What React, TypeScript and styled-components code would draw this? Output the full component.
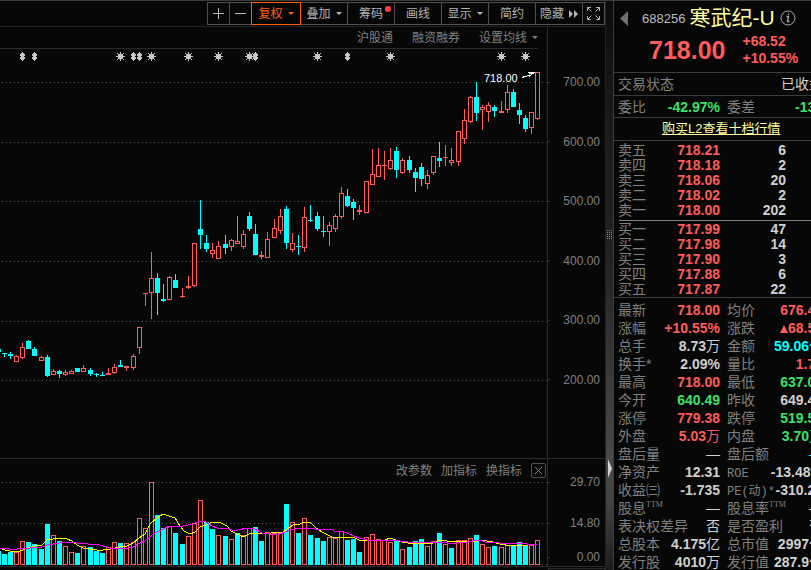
import React from "react";
import styled, { createGlobalStyle, css } from "styled-components";

const RED = "#ff5c5c";
const GREEN = "#3ee06a";
const CYAN = "#00ffff";
const LIGHT = "#d0d0d0";
const DIM = "#808080";
const LINE = "#3c3c3c";
const ORANGE = "#ff6010";

const tones = { red: RED, green: GREEN, cyan: CYAN, light: LIGHT };
type Tone = keyof typeof tones;

const GlobalStyle = createGlobalStyle`
  * { box-sizing: border-box; }
  html, body, #root { height: 100%; }
  body {
    margin: 0;
    background: #070707;
    overflow: hidden;
    color: ${LIGHT};
    font-family: "Liberation Sans", "Noto Sans CJK SC", sans-serif;
    font-size: 12px;
  }
`;

const Page = styled.div`
  display: grid;
  grid-template-columns: minmax(0, 1fr) 7px 198px;
  height: 100%;
  overflow: hidden;
  border-top: 1px solid ${LINE};
`;

const Main = styled.main`
  display: flex;
  flex-direction: column;
  min-width: 0;
  border-right: 1px solid #222;
`;

const Toolbar = styled.nav`
  display: flex;
  justify-content: flex-end;
  height: 26px;
  padding: 1px 0;
  border-bottom: 1px solid #222;
`;

const ToolButton = styled.button<{ $size?: "icon" | "text"; $active?: boolean }>`
  display: flex;
  align-items: center;
  justify-content: center;
  gap: 5px;
  width: ${(p) => (p.$size === "icon" ? 23 : p.$active ? 50 : 48)}px;
  height: 23px;
  margin-left: -1px;
  padding: 0;
  border: 1px solid ${(p) => (p.$active ? ORANGE : "#505050")};
  background: none;
  color: ${(p) => (p.$active ? ORANGE : "#b4b4b4")};
  font: inherit;
  line-height: 16px;
  white-space: nowrap;
  z-index: ${(p) => (p.$active ? 1 : 0)};
`;

const Caret = styled.span`
  border: 3px solid transparent;
  border-top-color: currentColor;
  border-bottom-width: 0;
`;

const Dotted = styled.span`
  position: relative;
  &::after {
    content: "";
    position: absolute;
    top: 0;
    right: -8px;
    width: 6px;
    height: 6px;
    border-radius: 50%;
    background: #ff4040;
  }
`;

const ChartGrid = styled.section<{ $height: number }>`
  display: grid;
  grid-template-columns: minmax(0, 1fr) 57px;
  height: ${(p) => p.$height}px;
  border-bottom: 1px solid #2a2a2a;
`;

const Plot = styled.div`
  display: flex;
  flex-direction: column;
  border-right: 1px solid #2a2a2a;
  min-width: 0;
`;

const Links = styled.div`
  display: flex;
  align-items: center;
  justify-content: flex-end;
  gap: 19px;
  height: 22px;
  margin-right: 9px;
  border-bottom: 1px solid #2a2a2a;
`;

const TextButton = styled.button`
  display: flex;
  align-items: center;
  gap: 5px;
  padding: 0;
  border: 0;
  background: none;
  color: ${DIM};
  font: inherit;
  line-height: 16px;
  white-space: nowrap;
`;

const Actions = styled.div`
  display: flex;
  align-items: center;
  justify-content: flex-end;
  gap: 9px;
  height: 23px;
`;

const CloseButton = styled.button`
  display: flex;
  width: 15px;
  height: 15px;
  margin: 0 1px 0 0;
  padding: 0;
  border: 1px solid #505050;
  border-radius: 2px;
  background: none;
  color: ${DIM};
`;

const Drawing = styled.svg`
  display: block;
  width: 100%;
  flex: 1;
  min-height: 0;
`;

const PriceAxis = styled.div`
  display: flex;
  flex-direction: column;
  justify-content: space-between;
  height: 310px;
  margin-top: 49px;
`;

const VolumeAxis = styled.div`
  display: grid;
  grid-template-rows: 41px 34px 12px;
  align-content: start;
  margin-top: 17px;
`;

const AxisLabel = styled.div`
  display: flex;
  align-items: center;
  justify-content: space-between;
  height: 12px;
  padding-right: 5px;
  color: ${DIM};
  line-height: 12px;
  &::before {
    content: "";
    width: 2px;
    height: 1px;
    background: #333;
  }
`;

const Footer = styled.div`
  flex: 1;
  display: flex;
  justify-content: flex-end;
`;

const FooterBox = styled.div`
  width: 57px;
  margin-top: 1px;
  border: 1px solid #2a2a2a;
  border-bottom: 0;
`;

const Splitter = styled.div`
  display: flex;
  flex-direction: column;
  align-items: center;
  justify-content: space-between;
  padding: 229px 0 92px;
  background: linear-gradient(#0c0c0c, #1a1a1a 20%, #222 45%, #4a4a4a 80%, #444 88%, #1c1c1c);
`;

const Side = styled.aside`
  overflow: hidden;
  border-left: 1px solid ${LINE};
`;

const SideInner = styled.div`
  width: 210px;
`;

const Header = styled.header`
  height: 72px;
  padding-top: 1px;
  border-bottom: 1px solid ${LINE};
`;

const Band = styled.div<{ $wide?: boolean }>`
  height: ${(p) => (p.$wide ? 23 : 22)}px;
  padding-top: 2px;
  border-bottom: 1px solid ${LINE};
`;

const TitleRow = styled.div`
  display: flex;
  align-items: center;
  height: 32px;
  padding-left: 6px;
`;

const BackButton = styled.button`
  display: flex;
  margin-right: 14px;
  padding: 0;
  border: 0;
  background: none;
`;

const Code = styled.span`
  margin-right: 4px;
  color: #b8bec8;
  font-size: 13px;
`;

const Name = styled.h1`
  margin: 0 5px 0 0;
  color: #ffffa0;
  font-size: 21px;
  font-weight: 400;
  line-height: 30px;
  white-space: nowrap;
`;

const PriceRow = styled.div`
  display: flex;
  align-items: center;
  gap: 17px;
  height: 32px;
  padding-left: 35px;
  color: ${RED};
`;

const BigPrice = styled.strong`
  font-size: 25px;
  line-height: 28px;
`;

const Change = styled.div`
  font-size: 14px;
  font-weight: 700;
  line-height: 17px;
`;

const BuyLink = styled.a`
  display: block;
  margin-left: 48px;
  color: #ffffa0;
  font-size: 13px;
  line-height: 18px;
  white-space: nowrap;
`;

const Book = styled.table`
  width: 168px;
  margin-left: 4px;
  border-collapse: collapse;
  table-layout: fixed;
  font-size: 14px;
`;

const cell = css`
  height: 15px;
  padding: 0;
  line-height: 15px;
  white-space: nowrap;
`;

const LevelName = styled.th`
  ${cell}
  width: 34px;
  color: ${DIM};
  font-weight: 400;
  text-align: left;
`;

const LevelPrice = styled.td`
  ${cell}
  width: 68px;
  color: ${RED};
  font-weight: 700;
  text-align: right;
`;

const LevelSize = styled.td`
  ${cell}
  color: ${LIGHT};
  font-weight: 700;
  text-align: right;
`;

const BookArea = styled.section`
  padding: 2px 0 0;
  border-bottom: 1px solid ${LINE};
`;

const BookRule = styled.hr`
  height: 1px;
  margin: 2px 0 1px 5px;
  border: 0;
  background: ${DIM};
`;

const Stats = styled.div`
  padding-top: 3px;
`;

const StatRow = styled.dl`
  display: grid;
  grid-template-columns: 102px 96px;
  column-gap: 7px;
  margin: 0;
  padding-left: 4px;
`;

const Stat = styled.div`
  display: flex;
  justify-content: space-between;
  height: 18px;
  font-size: 14px;
  line-height: 18px;
  white-space: nowrap;
`;

const Label = styled.dt`
  color: ${DIM};
`;

const Value = styled.dd<{ $tone: Tone }>`
  margin: 0;
  color: ${(p) => tones[p.$tone]};
  font-weight: 700;
`;

const Unit = styled.span`
  font-weight: 400;
`;

const Latin = styled.span`
  font-family: "Liberation Mono", "Noto Sans CJK SC", monospace;
  font-size: 12px;
`;

const Sup = styled.sup`
  color: #7c8088;
  font-family: "Liberation Serif", serif;
  font-size: 8px;
  line-height: 8px;
`;

/* x, high, body top, body bottom, low, direction, volume top */
type Candle = [number, number, number, number, number, "u" | "d", number];

const candles: Candle[] = [
  [-2, 349, 349, 352, 352, "d", 551], [4, 353, 353, 354, 357, "d", 554], [10, 352, 354, 356, 359, "d", 552],
  [16, 355, 356, 362, 362, "u", 552], [22, 343, 347, 358, 359, "u", 541], [28, 340, 341, 349, 349, "d", 542],
  [34, 347, 349, 356, 356, "d", 544], [41, 356, 357, 361, 361, "u", 549], [47, 355, 357, 376, 377, "d", 524],
  [53, 369, 371, 375, 375, "u", 535], [59, 370, 371, 374, 378, "d", 541], [65, 370, 372, 375, 376, "u", 546],
  [71, 370, 371, 374, 374, "u", 552], [77, 368, 368, 372, 372, "d", 553], [83, 365, 368, 372, 372, "u", 546],
  [90, 368, 370, 374, 376, "d", 547], [96, 373, 374, 375, 377, "d", 551], [102, 372, 375, 376, 376, "d", 553],
  [108, 368, 373, 375, 375, "u", 547], [114, 364, 367, 373, 374, "u", 542], [120, 360, 365, 367, 367, "d", 543],
  [126, 366, 366, 368, 371, "u", 543], [133, 354, 356, 368, 370, "u", 542], [139, 327, 327, 348, 354, "u", 518],
  [145, 293, 293, 294, 306, "u", 528], [151, 252, 278, 293, 319, "u", 482], [157, 273, 278, 293, 315, "d", 515],
  [163, 284, 299, 301, 302, "d", 528], [169, 276, 277, 300, 300, "u", 526], [175, 274, 280, 288, 288, "d", 533],
  [182, 288, 296, 297, 298, "u", 544], [188, 276, 286, 288, 289, "u", 536], [194, 243, 243, 286, 287, "u", 523],
  [200, 200, 229, 235, 249, "d", 500], [206, 235, 243, 249, 252, "d", 522], [212, 243, 250, 254, 258, "u", 529],
  [218, 241, 246, 259, 259, "u", 535], [225, 235, 244, 248, 254, "d", 536], [231, 239, 240, 247, 251, "u", 539],
  [237, 216, 241, 244, 244, "u", 533], [243, 230, 234, 247, 249, "u", 535], [249, 212, 216, 229, 231, "d", 528],
  [255, 224, 234, 255, 255, "d", 527], [261, 251, 255, 257, 259, "u", 541], [267, 232, 239, 258, 258, "u", 532],
  [274, 219, 228, 238, 238, "u", 533], [280, 209, 216, 231, 234, "u", 533], [286, 206, 209, 243, 249, "d", 504],
  [292, 233, 243, 250, 252, "u", 522], [298, 235, 246, 247, 255, "d", 533], [304, 207, 217, 248, 252, "u", 518],
  [310, 205, 220, 221, 222, "d", 535], [317, 212, 216, 229, 231, "d", 538], [323, 216, 231, 232, 237, "d", 541],
  [329, 222, 225, 232, 246, "u", 537], [335, 214, 216, 229, 232, "u", 538], [341, 187, 193, 217, 219, "u", 531],
  [347, 189, 196, 206, 207, "d", 540], [353, 199, 202, 208, 220, "d", 539], [359, 205, 210, 212, 215, "u", 552],
  [366, 181, 181, 213, 213, "u", 537], [372, 149, 174, 185, 185, "u", 534], [378, 148, 165, 177, 177, "u", 539],
  [384, 151, 165, 166, 180, "u", 540], [390, 148, 160, 169, 170, "u", 542], [396, 147, 151, 170, 178, "d", 540],
  [402, 158, 160, 173, 174, "u", 549], [409, 156, 160, 170, 173, "d", 547], [415, 168, 172, 178, 192, "d", 541],
  [421, 163, 167, 179, 186, "d", 539], [427, 170, 175, 184, 189, "u", 546], [433, 156, 156, 173, 175, "u", 541],
  [439, 142, 158, 161, 167, "d", 533], [445, 145, 157, 158, 166, "u", 544], [451, 148, 160, 163, 166, "u", 548],
  [458, 131, 131, 162, 166, "u", 540], [464, 109, 120, 139, 144, "u", 540], [470, 96, 97, 122, 123, "u", 538],
  [476, 82, 97, 113, 121, "d", 535], [482, 105, 107, 110, 130, "u", 544], [488, 102, 105, 112, 122, "u", 547],
  [494, 105, 107, 111, 117, "d", 546], [501, 101, 111, 113, 113, "u", 547], [507, 85, 92, 110, 113, "u", 545],
  [513, 89, 92, 107, 107, "d", 545], [519, 103, 110, 115, 124, "d", 542], [525, 115, 118, 129, 132, "d", 545],
  [531, 112, 112, 128, 134, "u", 545], [537, 72, 72, 119, 120, "u", 540],
];

/* Volume bars are coloured against the previous close, so these days differ from their candle. */
const volumeFlips = new Set([41, 182, 200, 212, 237, 249, 261, 359, 451]);

const MA_FAST =
  "0,548 5,550 10,551 20,551 28,548 35,546 42,545 47,540 53,539 59,538 67,539 72,541 77,545 83,548 90,549 97,550 103,550 110,549 120,547 127,546 133,543 139,538 145,534 150,524 157,518 163,514 169,516 175,518 180,526 184,531 190,534 195,532 200,527 206,525 212,522 219,522 227,526 231,531 237,534 243,537 249,534 256,533 267,534 275,532 282,533 287,529 293,525 300,524 304,522 310,522 316,528 322,532 328,535 334,538 341,537 349,538 353,537 359,540 385,540 390,538 396,540 402,542 408,543 414,544 420,543 425,543 433,543 441,540 447,541 452,542 457,541 473,542 482,540 487,541 493,542 500,544 512,546 518,545 527,545 533,544 537,544";
const MA_SLOW =
  "0,548 10,549 17,549 22,548 30,548 35,547 40,548 47,545 59,543 67,542 77,543 88,544 100,545 110,548 120,548 128,548 133,547 140,543 145,541 152,535 157,532 165,528 172,526 183,526 193,524 200,521 206,522 212,526 217,528 227,528 232,530 238,530 247,528 253,528 262,533 270,534 280,534 290,530 295,529 304,528 315,529 332,529 334,531 342,531 349,534 359,538 367,540 393,540 400,541 408,542 420,542 433,543 443,542 452,544 460,542 467,542 473,541 480,540 485,542 492,542 499,543 527,544 532,544 537,544";

const SUNS = [120, 151, 188, 218, 249, 317, 390, 501, 525];
const SPLITS = [22, 34, 133, 139, 255, 347];

function GridLine({ y }: { y: number }) {
  return <path d={`M2 ${y}.5H547`} stroke="#585858" strokeDasharray="1 3" />;
}

function CandleMark({ c }: { c: Candle }) {
  const [x, high, top, bottom, low, dir] = c;
  if (dir === "d") {
    return (
      <g fill={CYAN}>
        <rect x={x} y={high} width={1} height={low - high} />
        <rect x={x - 2} y={top} width={5} height={bottom - top} />
      </g>
    );
  }
  const solid = bottom - top < 3;
  return (
    <g fill={RED}>
      <rect x={x} y={high} width={1} height={top - high} />
      <rect x={x} y={bottom} width={1} height={low - bottom} />
      {solid ? (
        <rect x={x - 2} y={top} width={5} height={bottom - top} />
      ) : (
        <rect x={x - 1.5} y={top + 0.5} width={4} height={bottom - top - 1} fill="#070707" stroke={RED} />
      )}
    </g>
  );
}

function PriceChart() {
  return (
    <Drawing viewBox="0 49 547 409" preserveAspectRatio="xMaxYMin meet" shapeRendering="crispEdges" aria-label="日K线">
      {[82, 142, 201, 261, 321, 380].map((y) => <GridLine key={y} y={y} />)}
      {SUNS.map((x) => (
        <g key={x} fill="#c8c8c8">
          <rect x={x - 2} y={54} width={5} height={5} />
          <path d={`M${x} 52h1v9h-1zM${x - 4} 56h9v1h-9zM${x - 3} 53h1v1h-1zM${x + 3} 53h1v1h-1zM${x - 3} 59h1v1h-1zM${x + 3} 59h1v1h-1z`} />
        </g>
      ))}
      {SPLITS.map((x) => (
        <path key={x} fill="#c8c8c8" d={`M${x} 52h1v1h1v1h1v2h-1v1h1v2h-1v1h-1v1h-1v-1h-1v-1h-1v-2h1v-1h-1v-2h1v-1h1z`} />
      ))}
      {candles.map((c) => <CandleMark key={c[0]} c={c} />)}
      <text x={484} y={82} fill="#fff" fontSize={11} fontFamily="Liberation Sans">718.00</text>
      <path d="M522 77.5L530 75" stroke="#fff" fill="none" />
      <path d="M528 72.500L536 72L529 77L530.500 74.500Z" fill="#fff" />
    </Drawing>
  );
}

function VolumeChart() {
  return (
    <Drawing viewBox="0 482 547 84" preserveAspectRatio="xMaxYMin meet" shapeRendering="crispEdges" aria-label="成交量">
      {[482, 523, 564].map((y) => <GridLine key={y} y={y} />)}
      {candles.map(([x, , , , , dir, top]) =>
        (dir === "d") !== volumeFlips.has(x) ? (
          <rect key={x} x={x - 2} y={top} width={5} height={565 - top} fill={CYAN} />
        ) : (
          <rect key={x} x={x - 1.5} y={top + 0.5} width={4} height={564 - top} fill="#070707" stroke={RED} />
        )
      )}
      <polyline points={MA_FAST} fill="none" stroke="#ffff00" />
      <polyline points={MA_SLOW} fill="none" stroke="#ff00ff" />
    </Drawing>
  );
}

const sells = [["卖五", "718.21", "6"], ["卖四", "718.18", "2"], ["卖三", "718.06", "20"], ["卖二", "718.02", "2"], ["卖一", "718.00", "202"]];
const buys = [["买一", "717.99", "47"], ["买二", "717.98", "14"], ["买三", "717.90", "3"], ["买四", "717.88", "6"], ["买五", "717.87", "22"]];

type Item = [React.ReactNode, React.ReactNode, string, Tone];

const Rise = () => (
  <svg width="8" height="8" fill="currentColor" aria-label="涨"><path d="M4 0L8 8H0Z" /></svg>
);

const stats: [Item, Item][] = [
  [["最新", "718.00", "", "red"], ["均价", "676.45", "", "red"]],
  [["涨幅", "+10.55%", "", "red"], ["涨跌", <><Rise />68.52</>, "", "red"]],
  [["总手", "8.73", "万", "light"], ["金额", "59.06", "亿", "cyan"]],
  [["换手*", "2.09%", "", "light"], ["量比", "1.74", "", "red"]],
  [["最高", "718.00", "", "red"], ["最低", "637.01", "", "green"]],
  [["今开", "640.49", "", "green"], ["昨收", "649.48", "", "light"]],
  [["涨停", "779.38", "", "red"], ["跌停", "519.58", "", "green"]],
  [["外盘", "5.03", "万", "red"], ["内盘", "3.70", "万", "green"]],
  [["盘后量", "", "—", "light"], ["盘后额", "", "—", "cyan"]],
  [["净资产", "12.31", "", "light"], [<Latin>ROE</Latin>, "-13.48%", "", "light"]],
  [["收益㈢", "-1.735", "", "light"], [<Latin>PE(动)*</Latin>, "-310.25", "", "light"]],
  [[<>股息<Sup>TTM</Sup></>, "", "—", "light"], [<>股息率<Sup>TTM</Sup></>, "", "—", "light"]],
  [["表决权差异", "", "否", "light"], ["是否盈利", "", "否", "light"]],
  [["总股本", "4.175", "亿", "light"], ["总市值", "2997", "亿", "light"]],
  [["发行股", "4010", "万", "light"], ["发行值", "287.9", "亿", "light"]],
];

function StatItem({ item }: { item: Item }) {
  const [label, value, unit, tone] = item;
  return (
    <Stat>
      <Label>{label}</Label>
      <Value $tone={tone}>{value}{unit && <Unit>{unit}</Unit>}</Value>
    </Stat>
  );
}

function Levels({ rows }: { rows: string[][] }) {
  return (
    <Book>
      <tbody>
        {rows.map(([name, price, size]) => (
          <tr key={name}>
            <LevelName scope="row">{name}</LevelName>
            <LevelPrice>{price}</LevelPrice>
            <LevelSize>{size}</LevelSize>
          </tr>
        ))}
      </tbody>
    </Book>
  );
}

export default function App() {
  return (
    <>
      <GlobalStyle />
      <Page>
        <Main>
          <Toolbar>
            <ToolButton $size="icon" aria-label="放大">
              <svg width="11" height="11" stroke="currentColor"><path d="M5.500 0V11M0 5.500H11" /></svg>
            </ToolButton>
            <ToolButton $size="icon" aria-label="缩小">
              <svg width="11" height="11" stroke="currentColor"><path d="M0 5.500H11" /></svg>
            </ToolButton>
            <ToolButton $active>复权<Caret /></ToolButton>
            <ToolButton>叠加<Caret /></ToolButton>
            <ToolButton><Dotted>筹码</Dotted></ToolButton>
            <ToolButton>画线</ToolButton>
            <ToolButton>显示<Caret /></ToolButton>
            <ToolButton>简约</ToolButton>
            <ToolButton>
              隐藏
              <svg width="9" height="8" fill="currentColor"><path d="M0 0L4 4L0 8ZM5 0L9 4L5 8Z" /></svg>
            </ToolButton>
            <ToolButton $size="icon" aria-label="全屏">
              <svg width="13" height="13" fill="none" stroke="currentColor">
                <path d="M.5 4V.5H4M.5 .5L4.500 4.500M9 .5H12.500V4M12.500 .5L8.500 4.500M.5 9V12.500H4M.5 12.500L4.500 8.500M9 12.500H12.500V9M12.500 12.500L8.500 8.500" />
              </svg>
            </ToolButton>
          </Toolbar>

          <ChartGrid $height={432}>
            <Plot>
              <Links>
                <TextButton>沪股通</TextButton>
                <TextButton>融资融券</TextButton>
                <TextButton>设置均线<Caret /></TextButton>
              </Links>
              <PriceChart />
            </Plot>
            <PriceAxis>
              {["700.00", "600.00", "500.00", "400.00", "300.00", "200.00"].map((t) => <AxisLabel key={t}>{t}</AxisLabel>)}
            </PriceAxis>
          </ChartGrid>

          <ChartGrid $height={108}>
            <Plot>
              <Actions>
                <TextButton>改参数</TextButton>
                <TextButton>加指标</TextButton>
                <TextButton>换指标</TextButton>
                <CloseButton aria-label="关闭">
                  <svg width="13" height="13" stroke="currentColor"><path d="M3 3L10 10M10 3L3 10" /></svg>
                </CloseButton>
              </Actions>
              <VolumeChart />
            </Plot>
            <VolumeAxis>
              {["29.70", "14.80", "0.00"].map((t) => <AxisLabel key={t}>{t}</AxisLabel>)}
            </VolumeAxis>
          </ChartGrid>
          <Footer><FooterBox /></Footer>
        </Main>

        <Splitter>
          <svg width="5" height="9" stroke="#888" strokeDasharray="1 1" shapeRendering="crispEdges">
            <path d="M.5 0V9M2.500 0V9M4.500 0V9" />
          </svg>
          <svg width="5" height="19" fill="#d0d0d0"><path d="M1 0L5 9.500L1 19Z" /></svg>
        </Splitter>

        <Side>
          <SideInner>
            <Header>
              <TitleRow>
                <BackButton aria-label="上一只">
                  <svg width="8" height="15" fill="#707070"><path d="M8 0V15L0 7.500Z" /></svg>
                </BackButton>
                <Code>688256</Code>
                <Name>寒武纪-U</Name>
                <svg width="16" height="16" fill="none" stroke="#a8a8a8">
                  <circle cx="8" cy="8" r="7" />
                  <path d="M6.500 6.500H8.500L7.500 11.500H9.500M8.500 3.500V5" strokeWidth="1.300" />
                </svg>
              </TitleRow>
              <PriceRow>
                <BigPrice>718.00</BigPrice>
                <Change>+68.52<br />+10.55%</Change>
              </PriceRow>
            </Header>
            <Band $wide>
              <StatRow>
                <StatItem item={["交易状态", "", "", "light"]} />
                <StatItem item={["", "", "已收盘", "light"]} />
              </StatRow>
            </Band>
            <Band>
              <StatRow>
                <StatItem item={["委比", "-42.97%", "", "green"]} />
                <StatItem item={["委差", "-134", "", "green"]} />
              </StatRow>
            </Band>
            <Band $wide><BuyLink href="#l2">购买L2查看十档行情</BuyLink></Band>
            <BookArea>
              <Levels rows={sells} />
              <BookRule />
              <Levels rows={buys} />
            </BookArea>
            <Stats>
              {stats.map(([a, b], i) => (
                <StatRow key={i}>
                  <StatItem item={a} />
                  <StatItem item={b} />
                </StatRow>
              ))}
            </Stats>
          </SideInner>
        </Side>
      </Page>
    </>
  );
}
